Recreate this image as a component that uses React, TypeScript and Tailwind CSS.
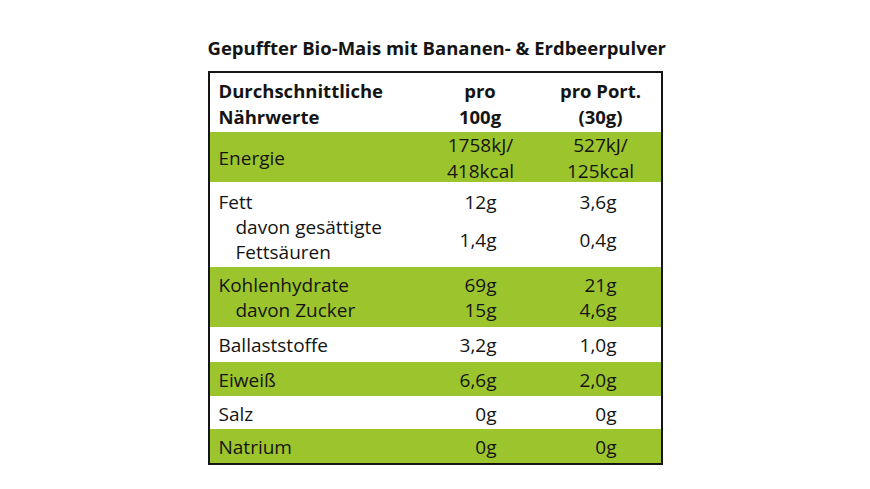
const font = { fontFamily: '"Open Sans", "Noto Sans", sans-serif' };

type Row = {
  label: string;
  indent?: boolean;
  a: string;
  b: string;
};

function ValueRow({ row }: { row: Row }) {
  return (
    <div className="grid grid-cols-[211px_120px_120px] items-center">
      <div className={row.indent ? "pl-[26px]" : "pl-[9px]"}>{row.label}</div>
      <div className="text-right pr-[44px]">{row.a}</div>
      <div className="text-right pr-[44px]">{row.b}</div>
    </div>
  );
}

export default function App() {
  return (
    <div className="min-h-screen w-full bg-white flex justify-center text-[#141414]" style={font}>
      <div className="w-[455px] pt-[34px]">
        <h1 className="text-[18.5px] font-bold leading-[28px] mb-[9px] whitespace-nowrap">
          Gepuffter Bio-Mais mit Bananen- &amp; Erdbeerpulver
        </h1>
        <div className="border-2 border-[#141414] text-[19px] leading-[25px]">
          {/* header */}
          <div className="grid grid-cols-[211px_120px_120px] font-bold text-[18.5px] leading-[26px] h-[59px] pt-[5px]">
            <div className="pl-[9px]">
              Durchschnittliche
              <br />
              Nährwerte
            </div>
            <div className="text-center pr-[1px]">
              pro
              <br />
              100g
            </div>
            <div className="text-center">
              pro Port.
              <br />
              (30g)
            </div>
          </div>

          {/* energie */}
          <div className="grid grid-cols-[211px_120px_120px] items-center bg-[#9cc42c] h-[50px] leading-[26px]">
            <div className="pl-[9px]">Energie</div>
            <div className="text-center">
              1758kJ/
              <br />
              418kcal
            </div>
            <div className="text-center">
              527kJ/
              <br />
              125kcal
            </div>
          </div>

          {/* fett */}
          <div className="h-[85px] pt-[8px]">
            <ValueRow row={{ label: "Fett", a: "12g", b: "3,6g" }} />
            <div className="grid grid-cols-[211px_120px_120px] items-center">
              <div className="pl-[26px]">
                davon gesättigte
                <br />
                Fettsäuren
              </div>
              <div className="text-right pr-[44px]">1,4g</div>
              <div className="text-right pr-[44px]">0,4g</div>
            </div>
          </div>

          {/* kohlenhydrate */}
          <div className="bg-[#9cc42c] h-[60px] pt-[6px]">
            <ValueRow row={{ label: "Kohlenhydrate", a: "69g", b: "21g" }} />
            <ValueRow row={{ label: "davon Zucker", indent: true, a: "15g", b: "4,6g" }} />
          </div>

          <div className="h-[35px] pt-[6px]">
            <ValueRow row={{ label: "Ballaststoffe", a: "3,2g", b: "1,0g" }} />
          </div>
          <div className="bg-[#9cc42c] h-[34px] pt-[6px]">
            <ValueRow row={{ label: "Eiweiß", a: "6,6g", b: "2,0g" }} />
          </div>
          <div className="h-[33px] pt-[6px]">
            <ValueRow row={{ label: "Salz", a: "0g", b: "0g" }} />
          </div>
          <div className="bg-[#9cc42c] h-[34px] pt-[6px]">
            <ValueRow row={{ label: "Natrium", a: "0g", b: "0g" }} />
          </div>
        </div>
      </div>
    </div>
  );
}
